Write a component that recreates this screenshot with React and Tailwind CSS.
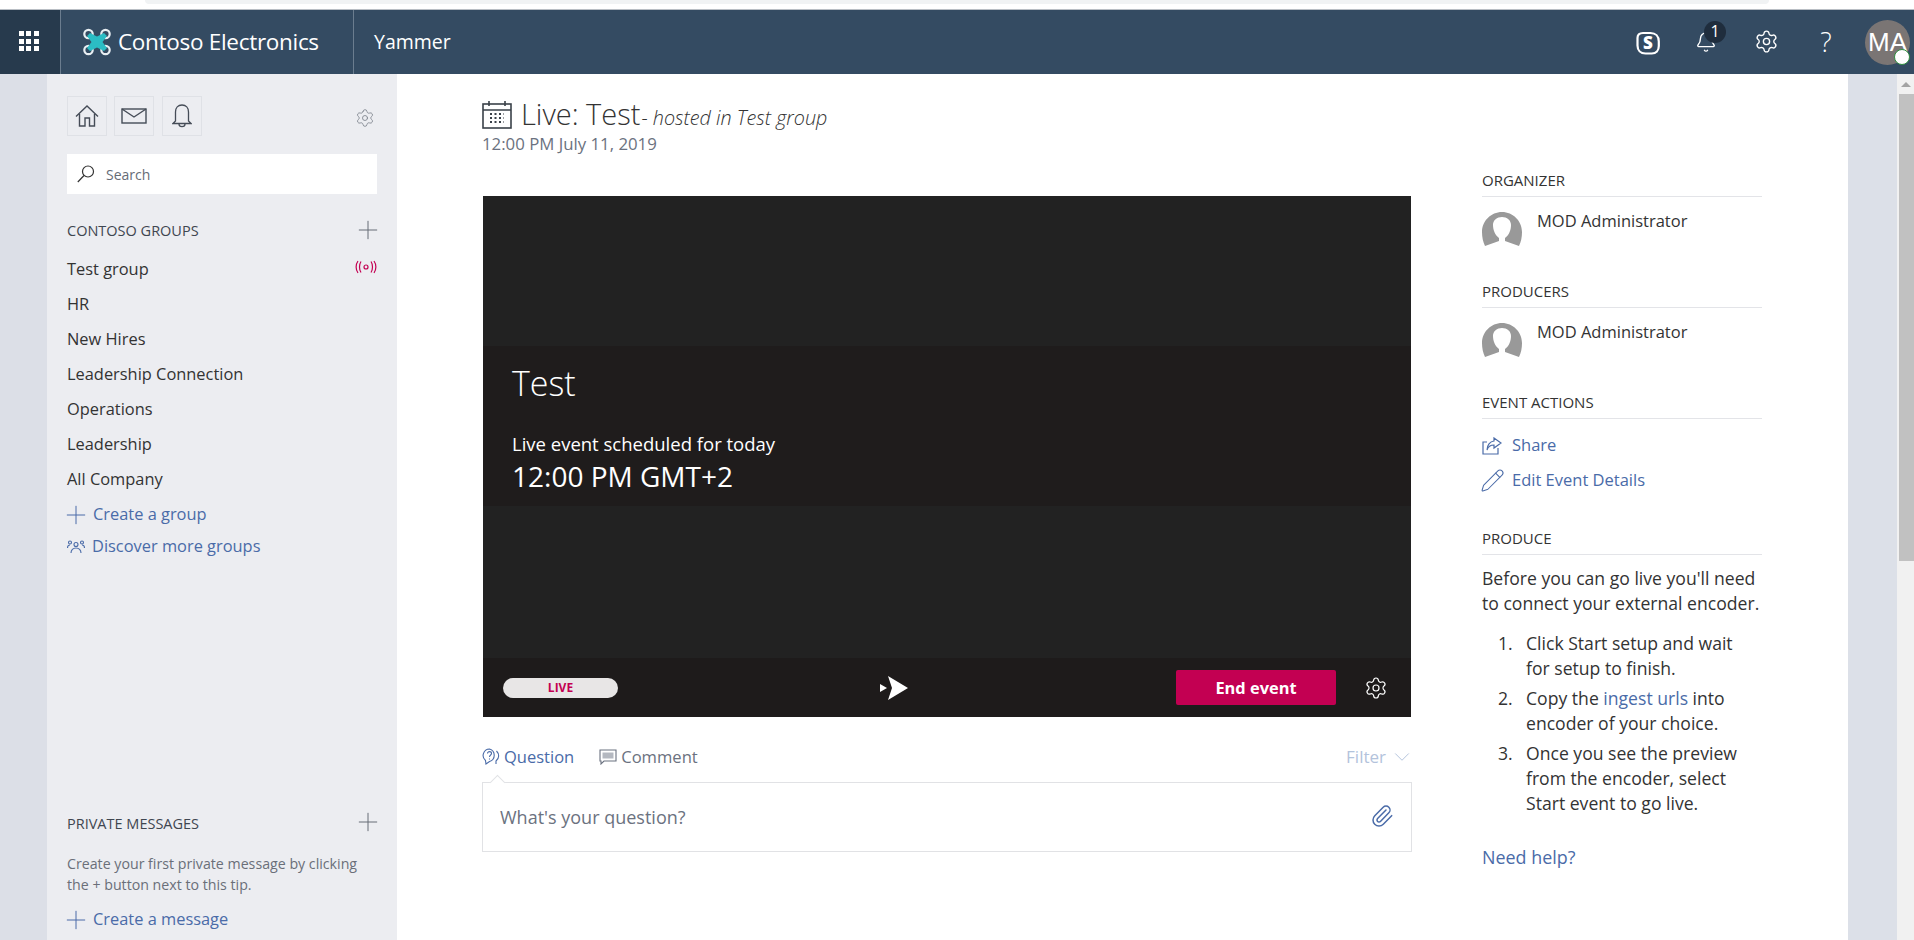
import React from 'react';
import { Bell, Settings, Plus, Pencil, Paperclip, ChevronDown } from 'lucide-react';

const groups = ['HR', 'New Hires', 'Leadership Connection', 'Operations', 'Leadership', 'All Company'];

function Logo() {
  return (
    <svg width="30" height="28" viewBox="0 0 30 28" fill="none">
      <circle cx="6.500" cy="6" r="4.200" stroke="#e8eef2" strokeWidth="2.200" />
      <circle cx="23.500" cy="6" r="4.200" stroke="#e8eef2" strokeWidth="2.200" />
      <circle cx="6.500" cy="22" r="4.200" stroke="#e8eef2" strokeWidth="2.200" />
      <circle cx="23.500" cy="22" r="4.200" stroke="#e8eef2" strokeWidth="2.200" />
      <path d="M8 5 L15 8.500 L22 5 L25 8 L20.500 14 L25 20 L22 23 L15 19.500 L8 23 L5 20 L9.500 14 L5 8 Z" fill="#2bbcc4" />
    </svg>
  );
}

function Waffle() {
  const dots = [0, 1, 2, 3, 4, 5, 6, 7, 8];
  return (
    <div className="grid grid-cols-3 gap-[2.500px] mr-[3px] -mt-[2px]">
      {dots.map((d) => (
        <span key={d} className="w-[5px] h-[5px] bg-white" />
      ))}
    </div>
  );
}

function SkypeIcon() {
  return (
    <svg width="24" height="24" viewBox="0 0 24 24" fill="none">
      <path d="M7 2h7.500C19.500 2 22.800 5 22.800 10.500v4.500c0 4.500-2.800 7.500-7 7.500H9.500C4.500 22.500 1.500 19 1.500 14.500V7C1.500 4 3.500 2 7 2z" stroke="white" strokeWidth="2.200" />
      <text x="12" y="18" textAnchor="middle" fontSize="17" fontWeight="800" fill="white" fontFamily="Open Sans, sans-serif">S</text>
    </svg>
  );
}

function HomeIcon() {
  return (
    <svg width="24" height="22" viewBox="0 0 24 22" fill="none" stroke="#454c57" strokeWidth="1.400">
      <path d="M1 11.500 L12 1 L23 11.500" />
      <path d="M4.500 9 V21 H10 V13 H14.500 V21 H19.500 V9" />
    </svg>
  );
}

function MailIcon() {
  return (
    <svg width="26" height="16" viewBox="0 0 26 16" fill="none" stroke="#454c57" strokeWidth="1.400">
      <rect x="1" y="1" width="24" height="14" />
      <path d="M1 1 L13 9 L25 1" />
    </svg>
  );
}

function NavBell() {
  return (
    <svg width="20" height="24" viewBox="0 0 20 24" fill="none" stroke="#454c57" strokeWidth="1.300">
      <path d="M1 19.500 H19 L16.500 17 V8 C16.500 4 14 1 10 1 C6 1 3.500 4 3.500 8 V17 Z" />
      <path d="M7 20 C7 23.500 13 23.500 13 20" />
    </svg>
  );
}

function SearchGlyph() {
  return (
    <svg width="18" height="18" viewBox="0 0 18 18" fill="none" stroke="#333" strokeWidth="1.200">
      <circle cx="11" cy="6.500" r="5.500" />
      <path d="M7 10.500 L0.800 17" />
    </svg>
  );
}

function ShareGlyph() {
  return (
    <svg width="20" height="18" viewBox="0 0 20 18" fill="none" stroke="#4a6ba8" strokeWidth="1.200">
      <path d="M5 5 H1 V17 H16 V11" />
      <path d="M12 1 L19 6 L12 11 V8 C8 8 6 10 5 13 C5 8 8 4.500 12 4 Z" />
    </svg>
  );
}

function Person() {
  return (
    <svg width="40" height="34" viewBox="0 0 40 34" className="shrink-0">
      <path d="M20 0C9 0 0 9 0 20c0 5 1 10 3 14l14-5v-3c-4-3-6-8-6-13 0-5 4-8 9-8s9 3 9 8c0 5-2 10-6 13v3l14 5c2-4 3-9 3-14C40 9 31 0 20 0z" fill="#999" />
    </svg>
  );
}

function Calendar() {
  return (
    <svg width="30" height="29" viewBox="0 0 30 29" fill="none" stroke="#3a4149" strokeWidth="1.600">
      <rect x="1" y="4" width="28" height="24" />
      <path d="M1 10h28M7 1v5M23 1v5" />
      <path d="M8 14h14M8 18h14M8 22h14" strokeWidth="2.200" strokeDasharray="2 2.500" />
    </svg>
  );
}

function LiveGlyph() {
  return (
    <svg width="22" height="14" viewBox="0 0 22 14" fill="none" stroke="#c30052" strokeWidth="1.200">
      <circle cx="11" cy="7" r="2" />
      <path d="M6 1.500C4 4.500 4 9.500 6 12.500M16 1.500C18 4.500 18 9.500 16 12.500M3 1C0.500 4.500 0.500 9.500 3 13M19 1C21.500 4.500 21.500 9.500 19 13" />
    </svg>
  );
}

function GroupsIcon() {
  return (
    <svg width="18" height="14" viewBox="0 0 18 14" fill="none" stroke="#4a6ba8" strokeWidth="1.100">
      <circle cx="9" cy="4.500" r="2" />
      <circle cx="3" cy="2.500" r="1.500" />
      <circle cx="15" cy="2.500" r="1.500" />
      <path d="M4 13c0-3 2-5 5-5s5 2 5 5M0.500 8c0-2 1-3 2.500-3M17.500 8c0-2-1-3-2.500-3" />
    </svg>
  );
}

function QuestionIcon() {
  return (
    <svg width="18" height="18" viewBox="0 0 18 18" fill="none" stroke="#4a6ba8" strokeWidth="1.100">
      <path d="M7.500 1a6.500 6.500 0 0 0-4 11.500L4 16l3.500-2.500A6.500 6.500 0 0 0 7.500 1z" />
      <path d="M5.500 5.500c0-2.500 4-2.500 4 0 0 1.500-2 1.500-2 3.500M7.500 10.500v1" />
      <path d="M14.500 3c3 3 3 7-0.500 10v3" />
    </svg>
  );
}

function CommentIcon() {
  return (
    <svg width="18" height="16" viewBox="0 0 18 16" fill="none">
      <path d="M1 1h16v11H5l-3 3v-3H1z" stroke="#6b7280" strokeWidth="1.100" />
      <path d="M3.500 3.500h11v6h-11z" fill="#b4b8c0" />
    </svg>
  );
}

function PlayGlyph() {
  return (
    <svg width="28" height="24" viewBox="0 0 28 24" fill="white">
      <path d="M8 0 L28 12 L8 24 L12 12 Z" />
      <path d="M0 8 L7 12 L0 16 Z" />
    </svg>
  );
}

function SectionHead({ children }) {
  return (
    <div className="h-[32px] border-b border-[#e3e4e8] text-[15px] leading-[30px] text-[#333]">{children}</div>
  );
}

function NavButton({ children }) {
  return (
    <div className="w-[40px] h-[40px] border border-[#dfe1e6] flex items-center justify-center">
      {children}
    </div>
  );
}

function AddLink({ children }) {
  return (
    <>
      <Plus size={30} strokeWidth={0.800} className="-mx-[6px]" />
      <span>{children}</span>
    </>
  );
}

export default function App() {
  return (
    <div className="h-[940px] overflow-hidden flex flex-col bg-white font-['Open_Sans',sans-serif]">
      {/* browser strip */}
      <div className="h-[10px] shrink-0 bg-white border-b border-[#b9bec4]">
        <div className="h-[4px] mx-[145px] bg-[#f1f3f4] rounded-b-md" />
      </div>

      {/* Header */}
      <div className="h-[64px] shrink-0 flex items-center bg-[#344b62] text-white">
        <div className="w-[60px] h-full bg-[#273a4d] flex items-center justify-center"><Waffle /></div>
        <div className="w-[294px] h-full border-l border-r border-[#6b7d8f] flex items-center pl-[21px] gap-[6px]">
          <Logo />
          <span className="text-[22.500px] font-medium tracking-[-0.3px] whitespace-nowrap">Contoso Electronics</span>
        </div>
        <span className="ml-[20px] text-[19.500px]">Yammer</span>
        <div className="ml-auto flex items-center">
          <div className="w-[60px] flex justify-center mt-[2px] ml-[2px] -mr-[2px]"><SkypeIcon /></div>
          <div className="w-[60px] flex justify-center relative">
            <Bell size={22} strokeWidth={1.500} />
            <span className="absolute left-[28px] top-[-10px] w-[22px] h-[22px] rounded-full bg-[#1f2d3d] text-[16px] leading-[20px] text-center">1</span>
          </div>
          <div className="w-[60px] flex justify-center -mt-[2px]"><Settings size={25} strokeWidth={1.300} /></div>
          <div className="w-[60px] flex justify-center text-[27px] font-light leading-none -mt-[2px]">?</div>
          <div className="relative w-[45px] h-[45px] ml-[9px] mr-[4px] rounded-full bg-[#7a7574] flex items-center justify-center text-[26px] font-['Liberation_Sans',sans-serif] whitespace-nowrap">
            MA
            <span className="absolute right-0 bottom-0 w-[16px] h-[16px] rounded-full bg-white border border-[#2f8f3f]" />
          </div>
        </div>
      </div>

      <div className="flex-1 flex min-h-0">
        <div className="w-[47px] shrink-0 bg-[#dcdfe7]" />

        {/* Sidebar */}
        <div className="w-[350px] shrink-0 bg-[#ecedf1] px-[20px] pt-[22px] flex flex-col text-[#333]">
          <div className="flex items-center">
            <NavButton><HomeIcon /></NavButton>
            <div className="ml-[7px]"><NavButton><MailIcon /></NavButton></div>
            <div className="ml-[8px]"><NavButton><NavBell /></NavButton></div>
            <Settings size={20} strokeWidth={1} className="ml-auto mr-[2px] mt-[3px] text-[#7b818a]" />
          </div>
          <div className="mt-[18px] h-[40px] bg-white flex items-center pl-[10px] gap-[11px] text-[14px] text-[#666c76]">
            <SearchGlyph />
            <span>Search</span>
          </div>
          <div className="mt-[27px] flex items-center justify-between h-[20px]">
            <span className="text-[14.500px] text-[#3f4650]">CONTOSO GROUPS</span>
            <Plus size={30} strokeWidth={0.800} className="-mr-[6px] -mt-[2px] text-[#666c76]" />
          </div>
          <div className="mt-[11px] flex flex-col text-[16.400px]">
            <div className="h-[35px] flex items-center justify-between">
              <span>Test group</span>
              <span className="-mt-[5px]"><LiveGlyph /></span>
            </div>
            {groups.map((g) => (
              <div key={g} className="h-[35px] flex items-center">{g}</div>
            ))}
          </div>
          <div className="h-[35px] flex items-center gap-[8px] text-[16.400px] text-[#4a6ba8]">
            <AddLink>Create a group</AddLink>
          </div>
          <div className="h-[29px] flex items-center gap-[7px] text-[16.400px] text-[#4a6ba8]">
            <GroupsIcon />
            <span>Discover more groups</span>
          </div>

          <div className="mt-auto flex items-center justify-between h-[20px]">
            <span className="text-[14.500px] text-[#3f4650]">PRIVATE MESSAGES</span>
            <Plus size={30} strokeWidth={0.800} className="-mr-[6px] -mt-[4px] text-[#666c76]" />
          </div>
          <div className="mt-[19px] text-[14.200px] leading-[21px] text-[#6a6f79]">
            Create your first private message by clicking the + button next to this tip.
          </div>
          <div className="mt-[10px] mb-[6px] h-[29px] flex items-center gap-[8px] text-[16.400px] text-[#4a6ba8]">
            <AddLink>Create a message</AddLink>
          </div>
        </div>

        {/* Main */}
        <div className="flex-1 min-w-0 flex pl-[85px] pt-[25px] text-[#333]">
          <div className="w-[930px] shrink-0">
            <div className="flex items-center h-[30px] whitespace-nowrap">
              <Calendar />
              <span className="ml-[9px] text-[29px] font-light text-[#333]">Live: Test</span>
              <span className="ml-[1px] mt-[8px] text-[19.800px] italic font-light">- hosted in Test group</span>
            </div>
            <div className="mt-[2px] text-[16.800px] text-[#6b7280]">12:00 PM July 11, 2019</div>

            {/* Video */}
            <div className="mt-[40px] mx-[1px] h-[521px] flex flex-col bg-[#222222] text-white">
              <div className="h-[150px]" />
              <div className="h-[160px] bg-[#1f1c1c] pl-[29px] pt-[12px]">
                <div className="text-[34px] font-light leading-[50px]">Test</div>
                <div className="mt-[24px] text-[18.500px] leading-[24px]">Live event scheduled for today</div>
                <div className="text-[28px] leading-[40px]">12:00 PM GMT+2</div>
              </div>
              <div className="flex-1" />
              <div className="h-[59px] bg-[#1e1b1b] flex items-center pl-[20px] pr-[23px]">
                <div className="w-[115px] h-[20px] rounded-full bg-[#e8e6e6] text-center text-[12px] leading-[20px] font-bold text-[#c30052]">LIVE</div>
                <div className="ml-[262px]"><PlayGlyph /></div>
                <div className="ml-auto w-[160px] h-[35px] rounded-[2px] bg-[#c30052] text-center text-[16.400px] leading-[35px] font-bold">End event</div>
                <Settings size={24} strokeWidth={1.200} className="ml-[28px]" />
              </div>
            </div>

            {/* Tabs */}
            <div className="mt-[29px] h-[22px] flex items-center">
              <QuestionIcon />
              <span className="ml-[4px] text-[16.500px] text-[#4a6ba8]">Question</span>
              <span className="ml-[25px]"><CommentIcon /></span>
              <span className="ml-[4px] text-[16.600px] text-[#6b7280]">Comment</span>
              <span className="ml-auto text-[17px] text-[#b3c3dc]">Filter</span>
              <ChevronDown size={26} strokeWidth={0.900} className="ml-[3px] -mr-[3px] text-[#b3c3dc]" />
            </div>
            <div className="relative mt-[14px] h-[70px] border border-[#e1e2e5] flex items-center justify-between pl-[17px] pr-[17px] text-[18px] text-[#6b7280]">
              <span className="absolute left-[9px] -top-[6px] w-[11px] h-[11px] rotate-45 bg-white border-l border-t border-[#e1e2e5]" />
              <span className="pt-[1px]">What's your question?</span>
              <Paperclip size={24} strokeWidth={1.500} className="text-[#4a6ba8] -mt-[2px]" />
            </div>
          </div>

          {/* Right column */}
          <div className="ml-[70px] w-[280px] shrink-0 text-[#333]">
            <div className="mt-[66px]" />
            <SectionHead>ORGANIZER</SectionHead>
            <div className="mt-[15px] h-[64px] flex items-start gap-[15px]">
              <Person />
              <span className="-mt-[2px] text-[16.500px] leading-[22px]">MOD Administrator</span>
            </div>
            <SectionHead>PRODUCERS</SectionHead>
            <div className="mt-[15px] h-[64px] flex items-start gap-[15px]">
              <Person />
              <span className="-mt-[2px] text-[16.500px] leading-[22px]">MOD Administrator</span>
            </div>
            <SectionHead>EVENT ACTIONS</SectionHead>
            <div className="mt-[9px] h-[35px] flex items-center gap-[10px] text-[16.500px] text-[#4a6ba8]">
              <ShareGlyph />
              <span>Share</span>
            </div>
            <div className="h-[35px] flex items-center text-[16.500px] text-[#4a6ba8]">
              <Pencil size={25} strokeWidth={1} className="-ml-[2px] mr-[7px]" />
              <span>Edit Event Details</span>
            </div>
            <div className="mt-[25px]"><SectionHead>PRODUCE</SectionHead></div>
            <p className="mt-[11px] -mr-[6px] text-[17.600px] leading-[25px]">Before you can go live you'll need to connect your external encoder.</p>
            <ol className="mt-[15px] pr-[8px] text-[17.600px] leading-[25px]">
              <li className="flex mb-[5px]">
                <span className="w-[44px] pl-[16px] shrink-0">1.</span>
                <span>Click Start setup and wait for setup to finish.</span>
              </li>
              <li className="flex mb-[5px]">
                <span className="w-[44px] pl-[16px] shrink-0">2.</span>
                <span>Copy the <span className="text-[#4a6ba8]">ingest urls</span> into encoder of your choice.</span>
              </li>
              <li className="flex">
                <span className="w-[44px] pl-[16px] shrink-0">3.</span>
                <span>Once you see the preview from the encoder, select Start event to go live.</span>
              </li>
            </ol>
            <div className="mt-[29px] text-[17.900px] leading-[25px] text-[#4a6ba8]">Need help?</div>
          </div>
        </div>

        <div className="w-[49px] shrink-0 bg-[#dce0e8]" />
        <div className="w-[17px] shrink-0 bg-[#f1f1f1] flex flex-col">
          <div className="h-[20px] flex items-center justify-center">
            <span className="w-0 h-0 border-x-[5px] border-x-transparent border-b-[5px] border-b-[#a3a3a3]" />
          </div>
          <div className="h-[467px] ml-[2px] bg-[#c1c1c1]" />
        </div>
      </div>
    </div>
  );
}
